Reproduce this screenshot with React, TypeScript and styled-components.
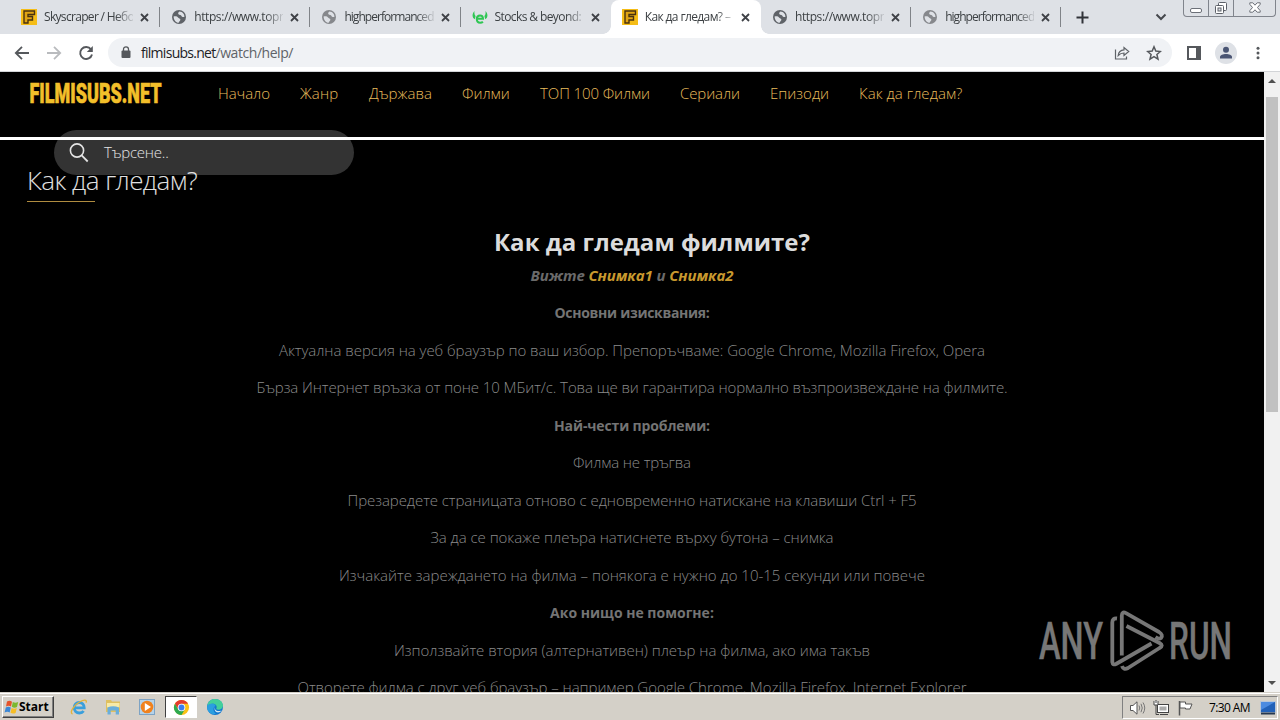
import React from "react";
import styled, { createGlobalStyle, css } from "styled-components";

const GlobalStyle = createGlobalStyle`
  body {
    margin: 0;
    background: #000;
    overflow: hidden;
    font-family: "Open Sans", "Noto Sans", sans-serif;
  }
`;

const Screen = styled.div`
  position: relative;
  display: flex;
  flex-direction: column;
  width: 1280px;
  height: 720px;
  overflow: hidden;
`;

/* Browser tabs */

const TabStrip = styled.div`
  display: flex;
  height: 34px;
  padding-left: 10px;
  background: #dee1e6;
`;

const Tab = styled.div<{ $active?: boolean; $divider?: boolean }>`
  position: relative;
  box-sizing: border-box;
  display: flex;
  align-items: center;
  width: 150.2px;
  flex: none;
  padding: 0 11px 0 11px;
  ${(p) =>
    p.$active &&
    css`
      background: #fff;
      border-radius: 8px 8px 0 0;
      &::before,
      &::after {
        content: "";
        position: absolute;
        bottom: 0;
        width: 8px;
        height: 8px;
      }
      &::before {
        left: -8px;
        background: radial-gradient(circle at 0 0, #dee1e6 7.5px, #fff 8px);
      }
      &::after {
        right: -8px;
        background: radial-gradient(circle at 100% 0, #dee1e6 7.5px, #fff 8px);
      }
    `}
  ${(p) =>
    p.$divider &&
    css`
      &::after {
        content: "";
        position: absolute;
        right: 0;
        top: 7px;
        width: 1px;
        height: 20px;
        background: #808388;
      }
    `}
`;

const TabTitle = styled.span<{ $spacing?: number }>`
  flex: 1;
  margin: 0 7px 0 7px;
  overflow: hidden;
  white-space: nowrap;
  font-size: 12px;
  line-height: 18px;
  letter-spacing: ${(p) => p.$spacing ?? -0.4}px;
  color: #3c4043;
  mask-image: linear-gradient(to right, #000 80%, rgba(0, 0, 0, 0.15) 100%);
`;

const NewTab = styled.div`
  display: flex;
  align-items: center;
  margin-left: 15px;
`;

const TabSearch = styled.div`
  display: flex;
  align-items: center;
  margin-left: 66px;
`;

const WindowControls = styled.div`
  box-sizing: border-box;
  display: flex;
  width: 93px;
  height: 17px;
  margin-left: 16px;
  border: 1px solid #80848c;
  border-top: 0;
  border-radius: 0 0 4px 4px;
`;

const WindowButton = styled.div<{ $width: number }>`
  box-sizing: border-box;
  display: flex;
  align-items: center;
  justify-content: center;
  width: ${(p) => p.$width}px;
  & + & {
    border-left: 1px solid #80848c;
  }
`;

/* Address bar */

const Toolbar = styled.div`
  box-sizing: border-box;
  display: flex;
  align-items: center;
  height: 38px;
  padding: 0 14px;
  background: #fff;
  border-bottom: 1px solid #d2d4d7;
`;

const NavButtons = styled.div`
  display: flex;
  gap: 16px;
  width: 94px;
`;

const Omnibox = styled.div`
  box-sizing: border-box;
  display: flex;
  align-items: center;
  width: 1064px;
  height: 29px;
  padding: 0 10px 0 13px;
  border-radius: 15px;
  background: #f0f2f5;
`;

const Url = styled.div`
  flex: 1;
  margin-left: 10px;
  font-size: 14px;
  line-height: 20px;
  letter-spacing: -0.45px;
  color: #5f6368;
`;

const Host = styled.span`
  letter-spacing: -0.72px;
  color: #202124;
`;

const OmniboxActions = styled.div`
  display: flex;
  gap: 16px;
`;

const BrowserActions = styled.div`
  display: flex;
  align-items: center;
  margin-left: 15px;
`;

const Avatar = styled.div`
  display: flex;
  align-items: center;
  justify-content: center;
  width: 22px;
  height: 22px;
  margin: 0 19px 0 14px;
  border-radius: 50%;
  background: #dee1e6;
`;

/* Web page */

const Viewport = styled.div`
  display: flex;
  height: 620px;
`;

const Page = styled.div`
  position: relative;
  width: 1264px;
  height: 620px;
  overflow: hidden;
  background: #000;
`;

const SiteHeader = styled.header`
  box-sizing: border-box;
  display: flex;
  align-items: flex-start;
  height: 68px;
  padding: 8px 0 0 28px;
  border-bottom: 3px solid #fff;
`;

const Nav = styled.nav`
  display: flex;
  gap: 30px;
  margin: 2px 0 0 54px;
`;

const NavLink = styled.a<{ $width: number; $spacing: number }>`
  width: ${(p) => p.$width}px;
  white-space: nowrap;
  font-size: 15px;
  font-weight: 300;
  line-height: 22px;
  letter-spacing: ${(p) => p.$spacing}px;
  color: #e8bc5c;
`;

const SearchBox = styled.div`
  position: absolute;
  left: 54px;
  top: 58px;
  box-sizing: border-box;
  display: flex;
  align-items: center;
  gap: 15px;
  width: 300px;
  height: 45px;
  padding-left: 15px;
  border-radius: 23px;
  background: rgba(255, 255, 255, 0.2);
  font-size: 15px;
  font-weight: 300;
  letter-spacing: -0.2px;
  color: #e4e4e4;
`;

const Placeholder = styled.span`
  padding-bottom: 2px;
`;

const PageTitle = styled.h1`
  position: relative;
  width: max-content;
  margin: 22px 0 0 27px;
  font-size: 26px;
  font-weight: 300;
  line-height: 36px;
  letter-spacing: -0.56px;
  color: #e0e0e0;
`;

const TitleRule = styled.div`
  width: 68px;
  height: 1px;
  margin: 3px 0 0 27px;
  background: #b08c40;
`;

const Article = styled.article`
  margin-top: 22.7px;
  text-align: center;
  font-size: 15px;
  font-weight: 300;
  line-height: 22.5px;
  color: #8a8a8a;
`;

const Heading = styled.h2`
  margin: 0 0 6px;
  padding-left: 40px;
  font-size: 24px;
  font-weight: 700;
  line-height: 33px;
  letter-spacing: 0.04px;
  color: #dcdcdc;
`;

const Paragraph = styled.p<{ $spacing?: number }>`
  margin: 0 0 15px;
  white-space: nowrap;
  letter-spacing: ${(p) => p.$spacing ?? 0}px;
`;

const Lead = styled(Paragraph)`
  font-style: italic;
  font-weight: 700;
  color: #6a6a6a;
`;

const Subheading = styled(Paragraph)`
  margin-bottom: 14px;
  padding-top: 1px;
  font-size: 14px;
  font-weight: 700;
  color: #747474;
`;

const Link = styled.a`
  color: #c8992e;
`;

const Watermark = styled.svg`
  position: absolute;
  left: 1036px;
  top: 606px;
`;

const Scrollbar = styled.div`
  display: flex;
  flex-direction: column;
  align-items: center;
  justify-content: space-between;
  width: 16px;
  background: #f1f1f1;
`;

const ScrollTrack = styled.div`
  flex: 1;
  padding-top: 7px;
`;

const ScrollThumb = styled.div`
  width: 12px;
  height: 315px;
  background: #c1c1c1;
`;

const ScrollArrow = styled.div<{ $down?: boolean }>`
  box-sizing: border-box;
  width: 8px;
  height: 4px;
  margin: ${(p) => (p.$down ? "0 0 7px" : "7px 0")};
  background: #505050;
  clip-path: ${(p) => (p.$down ? "polygon(0 0, 100% 0, 50% 100%)" : "polygon(50% 0, 100% 100%, 0 100%)")};
`;

/* Taskbar */

const Taskbar = styled.div`
  box-sizing: border-box;
  display: flex;
  align-items: flex-start;
  height: 28px;
  padding: 2px 2px 0;
  background: #d4d0c8;
  border-top: 1px solid #d4d0c8;
  box-shadow: inset 0 1px 0 #fff;
`;

const StartButton = styled.div`
  box-sizing: border-box;
  display: flex;
  align-items: center;
  width: 52px;
  height: 22px;
  margin-top: 1px;
  padding-left: 1px;
  border: 1px solid;
  border-color: #fff #404040 #404040 #fff;
  box-shadow: inset -1px -1px 0 #808080;
  font: 700 12px/16px "Open Sans", "Noto Sans", sans-serif;
  letter-spacing: 0;
  color: #000;
`;

const QuickLaunch = styled.div`
  display: flex;
  margin-left: 8px;
`;

const TaskButton = styled.div<{ $pressed?: boolean }>`
  box-sizing: border-box;
  display: flex;
  align-items: center;
  justify-content: center;
  width: 32px;
  height: 22px;
  margin: 1px 1px 0;
  ${(p) =>
    p.$pressed &&
    css`
      background: #fff;
      border: 1px solid;
      border-color: #404040 #fff #fff #404040;
    `}
`;

const Tray = styled.div`
  box-sizing: border-box;
  display: flex;
  align-items: center;
  width: 156px;
  height: 23px;
  margin: 1px 0 0 auto;
  padding: 0 1px 0 6px;
  border: 1px solid;
  border-color: #808080 #fff #fff #808080;
`;

const TrayIcons = styled.div`
  display: flex;
  gap: 7px;
`;

const Clock = styled.span`
  width: 41px;
  margin: 0 10px 0 auto;
  white-space: nowrap;
  font-size: 12px;
  line-height: 16px;
  letter-spacing: -0.6px;
  color: #000;
`;

const FilmIcon = () => (
  <svg width="16" height="16" viewBox="0 0 16 16">
    <rect width="16" height="16" fill="#f5bd17" />
    <path d="M3 14V2h10.500v3.500H7v2h4.500v3.500H7v3z" fill="#e0a414" stroke="#4a3210" strokeWidth="1.400" />
  </svg>
);

const GlobeIcon = ({ color }: { color: string }) => (
  <svg width="16" height="16" viewBox="0 0 16 16">
    <circle cx="8" cy="8" r="7" fill={color} />
    <path d="M2.600 7.500c1.600-.6 3.800-.3 4.400.9.500 1.100 2.500.7 2.400 2.400-.1 1.500-1.400 1.300-1.700 3-2.800 0-5-2.700-5.100-6.300zM8.500 2.500c-1 .8-1.800 1.500-1 2.700.8 1 2.600.2 3 1.700.3 1.100 1.500 1.300 2.900 1C13.500 5 11.500 2.600 8.500 2.500z" fill="#dee1e6" />
  </svg>
);

const ToroIcon = () => (
  <svg width="16" height="16" viewBox="0 0 16 16">
    <path d="M2.600 2C0 4.500-.3 8.500 2.800 10.200L3.600 7C2.300 5.500 2.200 3.700 2.600 2zM13.400 2c2.600 2.500 2.900 6.500-.2 8.200L12.400 7c1.300-1.500 1.400-3.300 1-5z" fill="#2fc653" />
    <path d="M5 9.700h6c0-2-1.200-3.300-3-3.300S4.800 7.800 4.800 10s1.300 3.700 3.400 3.700c1.200 0 2-.3 2.700-1" fill="none" stroke="#2fc653" strokeWidth="2" />
  </svg>
);

const CloseIcon = () => (
  <svg width="9" height="9" viewBox="0 0 9 9">
    <path d="M1 1l7 7M8 1L1 8" stroke="#3f4247" strokeWidth="1.8" />
  </svg>
);

const BackIcon = ({ flip }: { flip?: boolean }) => (
  <svg width="16" height="16" viewBox="0 0 16 16">
    <path
      d={flip ? "M1 8h13M8 1.800L14.200 8 8 14.200" : "M15 8H2M8 1.800L1.800 8 8 14.200"}
      fill="none"
      stroke={flip ? "#b9bbbe" : "#55585c"}
      strokeWidth="1.8"
    />
  </svg>
);

const ReloadIcon = () => (
  <svg width="16" height="16" viewBox="0 0 16 16">
    <path d="M13 4.400A6 6 0 1 0 14 9.500" fill="none" stroke="#55585c" strokeWidth="1.9" />
    <path d="M14.800 1v6H8.800z" fill="#55585c" />
  </svg>
);

const LockIcon = () => (
  <svg width="10" height="13" viewBox="0 0 10 13">
    <rect x="0.500" y="4.500" width="9" height="7.500" rx="1" fill="#55585c" />
    <path d="M2.500 5V3.300a2.500 2.500 0 0 1 5 0V5" fill="none" stroke="#55585c" strokeWidth="1.300" />
  </svg>
);

const ShareIcon = () => (
  <svg width="16" height="16" viewBox="0 0 16 16">
    <path d="M1.500 4.500v9.500h11v-2.500" fill="none" stroke="#5f6368" strokeWidth="1.200" />
    <path d="M4.200 10.500c.4-3.700 2.400-5.400 5.800-5.600V2.500l4.700 4-4.700 4V8C7.500 8 5.800 8.800 4.200 10.500z" fill="none" stroke="#5f6368" strokeWidth="1.200" />
  </svg>
);

const StarIcon = () => (
  <svg width="16" height="16" viewBox="0 0 16 16">
    <path d="M8 1.800l1.800 4.300 4.600.4-3.500 3 1.100 4.600L8 11.700l-4 2.400 1.100-4.600-3.500-3 4.600-.4z" fill="none" stroke="#55585c" strokeWidth="1.500" />
  </svg>
);

const SidePanelIcon = () => (
  <svg width="14" height="14" viewBox="0 0 14 14">
    <rect x="1" y="1" width="12" height="12" fill="none" stroke="#55585c" strokeWidth="2" />
    <rect x="9" y="1" width="4" height="12" fill="#55585c" />
  </svg>
);

const PersonIcon = () => (
  <svg width="14" height="14" viewBox="0 0 14 14">
    <circle cx="7" cy="3.800" r="3" fill="#4a5573" />
    <path d="M1 12.500V11c0-2 3-3 6-3s6 1 6 3v1.500z" fill="#4a5573" />
  </svg>
);

const DotsIcon = () => (
  <svg width="4" height="14" viewBox="0 0 4 14">
    <circle cx="2" cy="2.200" r="1.500" fill="#55585c" />
    <circle cx="2" cy="7" r="1.500" fill="#55585c" />
    <circle cx="2" cy="11.800" r="1.500" fill="#55585c" />
  </svg>
);

const PlayTriangles = () => (
  <g fill="none" stroke="#777" strokeWidth="3.800" strokeLinejoin="round" strokeLinecap="butt">
    <path d="M81 12.500Q76.300 12 76.300 16.500V56Q76.800 59.500 80 58L115.500 37.500" />
    <path d="M85.800 49.500V9.500Q86 5 90 7.200L123 26Q127.500 29 125 32Q123 33.500 119.500 31" />
    <path d="M90.500 20L123.500 37Q128 39.500 123.500 42L92 62Q87.500 64.500 86 60" />
  </g>
);

const StartFlag = () => (
  <svg width="15" height="15" viewBox="0 0 15 15">
    <path d="M3 1.500c2-1 3.500-.8 5 .2L7 6.500c-1.600-1-3.200-1-5 0z" fill="#e5532a" />
    <path d="M8.800 2c1.800 1 3.400 1 5.400 0L13 7c-1.800 1-3.500.8-5.200-.2z" fill="#7cb82f" />
    <path d="M1.800 7.500c1.800-1 3.500-.8 5 .1l-1.100 5c-1.500-1-3.200-1-5.100 0z" fill="#3b87d6" />
    <path d="M7.600 8c1.700 1 3.400 1 5.200.1l-1.200 4.800c-1.900 1-3.600.8-5.100-.1z" fill="#f6bd26" />
  </svg>
);

const ExplorerIcon = () => (
  <svg width="18" height="18" viewBox="0 0 18 18">
    <path d="M4.500 9.800h9.700c0-3.200-2-5.300-5-5.300s-5 2.200-5 5.300 2 5.200 5.200 5.200c1.900 0 3.300-.7 4.200-2" fill="none" stroke="#3a9fdc" strokeWidth="2.800" />
    <path d="M2.500 16C-1 14.500 4 7 9.500 4c4-2.400 8-2.800 6.500.6" fill="none" stroke="#e3b33b" strokeWidth="1.400" />
  </svg>
);

const FolderIcon = () => (
  <svg width="18" height="18" viewBox="0 0 18 18">
    <path d="M2 2h5l1 1.500h8V14H2z" fill="#dfc060" />
    <path d="M3 5h12.500v4.500H3z" fill="#f7eaa8" />
    <path d="M3.500 16.500V9.500Q9 7 15 9.500v7h-3.300v-4h-5v4z" fill="#6aaedb" />
  </svg>
);

const MediaIcon = () => (
  <svg width="18" height="18" viewBox="0 0 18 18">
    <rect x="1.500" y="1.500" width="15" height="15" fill="#b5d3ea" stroke="#7da3c4" />
    <circle cx="9" cy="9" r="6.300" fill="#f0821e" />
    <path d="M6.800 5L13 9l-6.200 4z" fill="#fff" />
  </svg>
);

const ChromeIcon = () => (
  <svg width="17" height="17" viewBox="0 0 18 18">
    <circle cx="9" cy="9" r="8" fill="#fbc116" />
    <path d="M2.070 5A8 8 0 0 1 15.930 5H9L5.500 11z" fill="#e33b2e" />
    <path d="M2.070 5A8 8 0 0 0 9 17l3.500-6H5.500z" fill="#2da94f" />
    <circle cx="9" cy="9" r="4" fill="#fff" />
    <circle cx="9" cy="9" r="3.100" fill="#3b7ded" />
  </svg>
);

const EdgeIcon = () => (
  <svg width="18" height="18" viewBox="0 0 18 18">
    <circle cx="9" cy="9" r="8" fill="#1277cf" />
    <path d="M1.200 8C2 3.500 5 1 9 1c5 0 8 3.200 8 6.600 0 2.700-2 4.200-4.500 4.200-2 0-2.600-.8-2-1.700C12 6.500 6 3.500 1.200 8z" fill="#43cf9b" />
    <path d="M1.200 8C5 3.800 9.500 6 9.500 8c-2.500 1-3 5.500.5 7.800C5 17.500.5 13.500 1.200 8z" fill="#2b9fe0" />
    <path d="M9.300 8.500c-1.500 3 1.500 5.800 6.200 4-.8 1.400-3 2.300-4.600 1.800C8.500 13.500 8 10.500 9.300 8.500z" fill="#d4e8f2" />
  </svg>
);

const SpeakerIcon = () => (
  <svg width="17" height="16" viewBox="0 0 17 16">
    <path d="M1.500 5.500H4L8 1.800v12.400L4 10.500H1.500z" fill="#fff" stroke="#555" />
    <path d="M10 5.500q1.500 2.500 0 5M12 3.800q2.500 4.200 0 8.400M14 2.500q3.500 5.500 0 11" fill="none" stroke="#777" />
  </svg>
);

const NetworkIcon = () => (
  <svg width="17" height="16" viewBox="0 0 17 16">
    <rect x="4.500" y="4.500" width="11" height="8" fill="#fff" stroke="#444" />
    <rect x="6.500" y="6.500" width="7" height="4" fill="#aaa" />
    <path d="M7 14.500h8M3 5v9.500h3" fill="none" stroke="#444" />
    <path d="M1 1v4h4V1M3 0v3" fill="#fff" stroke="#444" />
  </svg>
);

const FlagIcon = () => (
  <svg width="17" height="16" viewBox="0 0 17 16">
    <path d="M2.500 1v14.500" stroke="#555" strokeWidth="1.500" />
    <path d="M3 2h5.500v2H15l-2 5H8.500V8H3z" fill="#fff" stroke="#555" />
  </svg>
);

const DesktopIcon = () => (
  <svg width="16" height="14" viewBox="0 0 16 14">
    <rect x="0.500" y="0.500" width="15" height="11" fill="#2261b8" stroke="#b8c6d8" />
    <path d="M1 1h14L1 9z" fill="#4c8be0" />
    <rect x="1" y="11.500" width="14" height="2" fill="#26384f" />
  </svg>
);

type TabData = { title: string; icon: React.ReactNode; active?: boolean; divider?: boolean; spacing?: number };

const tabs: TabData[] = [
  { title: "Skyscraper / Небо", icon: <FilmIcon />, divider: true, spacing: -0.68 },
  { title: "https://www.topr", icon: <GlobeIcon color="#5f6368" />, divider: true, spacing: -0.4 },
  { title: "highperformanced", icon: <GlobeIcon color="#86888c" />, divider: true, spacing: -0.95 },
  { title: "Stocks & beyond:", icon: <ToroIcon />, spacing: -0.6 },
  { title: "Как да гледам? –", icon: <FilmIcon />, active: true, spacing: -0.62 },
  { title: "https://www.topr", icon: <GlobeIcon color="#5f6368" />, divider: true, spacing: -0.4 },
  { title: "highperformanced", icon: <GlobeIcon color="#86888c" />, divider: true, spacing: -0.95 },
];

const navLinks: [string, number, number][] = [
  ["Начало", 52, -0.07],
  ["Жанр", 39, 0.15],
  ["Държава", 63, 0.04],
  ["Филми", 48, 0],
  ["ТОП 100 Филми", 110, -0.1],
  ["Сериали", 60, -0.1],
  ["Епизоди", 59, 0],
  ["Как да гледам?", 104, 0.06],
];

export default function App() {
  return (
    <Screen>
      <GlobalStyle />
      <TabStrip>
        {tabs.map((tab, i) => (
          <Tab key={i} $active={tab.active} $divider={tab.divider}>
            {tab.icon}
            <TabTitle $spacing={tab.spacing}>{tab.title}</TabTitle>
            <CloseIcon />
          </Tab>
        ))}
        <NewTab>
          <svg width="13" height="13" viewBox="0 0 13 13">
            <path d="M6.500.5v12M.5 6.500h12" stroke="#303338" strokeWidth="2" />
          </svg>
        </NewTab>
        <TabSearch>
          <svg width="12" height="8" viewBox="0 0 12 8">
            <path d="M1.500 1.500L6 6l4.500-4.500" fill="none" stroke="#45484d" strokeWidth="2" />
          </svg>
        </TabSearch>
        <WindowControls>
          <WindowButton $width={24}>
            <svg width="12" height="17" viewBox="0 0 12 17">
              <rect x=".5" y="8.500" width="11" height="4" rx="1.500" fill="#fff" stroke="#6c7078" />
            </svg>
          </WindowButton>
          <WindowButton $width={25}>
            <svg width="14" height="16" viewBox="0 0 14 16">
              <rect x="4.500" y="2.500" width="8" height="8" rx="1" fill="#fff" stroke="#5c6068" />
              <rect x="1.500" y="5.500" width="8" height="8" rx="1" fill="#fff" stroke="#5c6068" />
              <rect x="4" y="8" width="3" height="3" fill="#dee1e6" stroke="#5c6068" />
            </svg>
          </WindowButton>
          <WindowButton $width={42}>
            <svg width="12" height="16" viewBox="0 0 12 16">
              <path
                d="M.8 2.800h3L6 5.200l2.200-2.400h3v1.500L8.500 7.500l2.700 3.200v1.500h-3L6 9.800l-2.200 2.400h-3v-1.500l2.700-3.200L.8 4.300z"
                fill="#fff"
                stroke="#6c7078"
              />
            </svg>
          </WindowButton>
        </WindowControls>
      </TabStrip>

      <Toolbar>
        <NavButtons>
          <BackIcon />
          <BackIcon flip />
          <ReloadIcon />
        </NavButtons>
        <Omnibox>
          <LockIcon />
          <Url>
            <Host>filmisubs.net</Host>/watch/help/
          </Url>
          <OmniboxActions>
            <ShareIcon />
            <StarIcon />
          </OmniboxActions>
        </Omnibox>
        <BrowserActions>
          <SidePanelIcon />
          <Avatar>
            <PersonIcon />
          </Avatar>
          <DotsIcon />
        </BrowserActions>
      </Toolbar>

      <Viewport>
        <Page>
          <SiteHeader>
            <svg width="136" height="26" viewBox="0 0 136 26">
              <text
                x="1.500"
                y="22.800"
                textLength="132"
                lengthAdjust="spacingAndGlyphs"
                fontFamily="Roboto, sans-serif"
                fontWeight="900"
                fontSize="27"
                fill="#f2bf2a"
                stroke="#f2bf2a"
                strokeWidth="0.600"
              >
                FILMISUBS.NET
              </text>
            </svg>
            <Nav>
              {navLinks.map(([label, width, spacing]) => (
                <NavLink key={label} $width={width} $spacing={spacing}>
                  {label}
                </NavLink>
              ))}
            </Nav>
          </SiteHeader>
          <SearchBox>
            <svg width="20" height="20" viewBox="0 0 20 20">
              <circle cx="8" cy="7.500" r="6.600" fill="none" stroke="#e4e4e4" strokeWidth="1.600" />
              <path d="M12.700 12.300l6 6.200" stroke="#e4e4e4" strokeWidth="1.800" />
            </svg>
            <Placeholder>Търсене..</Placeholder>
          </SearchBox>
          <PageTitle>Как да гледам?</PageTitle>
          <TitleRule />
          <Article>
            <Heading>Как да гледам филмите?</Heading>
            <Lead $spacing={-0.1}>
              Вижте <Link>Снимка1</Link> и <Link>Снимка2</Link>
            </Lead>
            <Subheading $spacing={-0.3}>Основни изисквания:</Subheading>
            <Paragraph $spacing={-0.035}>
              Актуална версия на уеб браузър по ваш избор. Препоръчваме: Google Chrome, Mozilla Firefox, Opera
            </Paragraph>
            <Paragraph $spacing={-0.09}>
              Бърза Интернет връзка от поне 10 МБит/с. Това ще ви гарантира нормално възпроизвеждане на филмите.
            </Paragraph>
            <Subheading $spacing={-0.13}>Най-чести проблеми:</Subheading>
            <Paragraph $spacing={-0.14}>Филма не тръгва</Paragraph>
            <Paragraph $spacing={-0.063}>
              Презаредете страницата отново с едновременно натискане на клавиши Ctrl + F5
            </Paragraph>
            <Paragraph $spacing={-0.044}>За да се покаже плеъра натиснете върху бутона – снимка</Paragraph>
            <Paragraph $spacing={-0.011}>
              Изчакайте зареждането на филма – понякога е нужно до 10-15 секунди или повече
            </Paragraph>
            <Subheading>Ако нищо не помогне:</Subheading>
            <Paragraph $spacing={-0.043}>Използвайте втория (алтернативен) плеър на филма, ако има такъв</Paragraph>
            <Paragraph $spacing={-0.044}>
              Отворете филма с друг уеб браузър – например Google Chrome, Mozilla Firefox, Internet Explorer
            </Paragraph>
          </Article>
        </Page>
        <Scrollbar>
          <ScrollArrow />
          <ScrollTrack>
            <ScrollThumb />
          </ScrollTrack>
          <ScrollArrow $down />
        </Scrollbar>
      </Viewport>

      <Taskbar>
        <StartButton>
          <StartFlag />
          Start
        </StartButton>
        <QuickLaunch>
          <TaskButton><ExplorerIcon /></TaskButton>
          <TaskButton><FolderIcon /></TaskButton>
          <TaskButton><MediaIcon /></TaskButton>
          <TaskButton $pressed><ChromeIcon /></TaskButton>
          <TaskButton><EdgeIcon /></TaskButton>
        </QuickLaunch>
        <Tray>
          <TrayIcons>
            <SpeakerIcon />
            <NetworkIcon />
            <FlagIcon />
          </TrayIcons>
          <Clock>7:30 AM</Clock>
          <DesktopIcon />
        </Tray>
      </Taskbar>

      <Watermark width="200" height="70" viewBox="0 0 200 70">
        <g fill="#777" stroke="#777" strokeWidth="0.400" fontFamily="Roboto, sans-serif" fontWeight="500" fontSize="51.500">
          <text x="3" y="53.300" textLength="64" lengthAdjust="spacingAndGlyphs">ANY</text>
          <text x="133" y="53.300" textLength="63" lengthAdjust="spacingAndGlyphs">RUN</text>
        </g>
        <PlayTriangles />
      </Watermark>
    </Screen>
  );
}
